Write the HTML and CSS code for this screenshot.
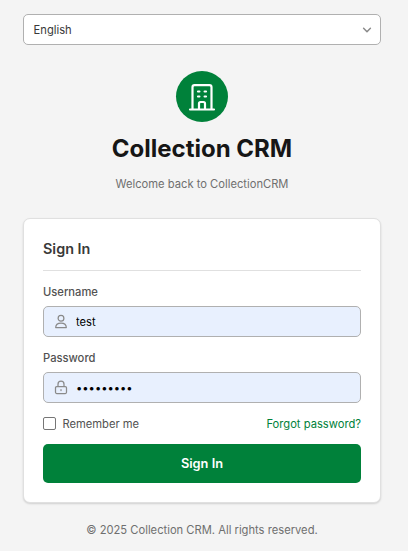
FILE: index.html
```html
<!DOCTYPE html>
<html lang="en">
<head>
<meta charset="utf-8">
<title>Collection CRM</title>
<link rel="stylesheet" href="styles.css">
</head>
<body>
<main class="page">
  <div class="language">
    <span>English</span>
    <svg class="chevron" viewBox="0 0 10 10"><path d="M1.6 3.3 5 6.7l3.4-3.4"/></svg>
  </div>
  <header class="brand">
    <div class="logo">
      <svg viewBox="0 0 32 32"><path d="M4 28.500h24M6.500 28.500V6.200a2 2 0 0 1 2-2h15a2 2 0 0 1 2 2v22.300M12 10.500h1.400M18.600 10.500h1.400M12 15.500h1.400M18.600 15.500h1.400M13 28.500v-6a1.500 1.500 0 0 1 1.500-1.500h3a1.500 1.500 0 0 1 1.500 1.500v6"/></svg>
    </div>
    <h1>Collection CRM</h1>
    <p>Welcome back to CollectionCRM</p>
  </header>
  <form class="card">
    <h2>Sign In</h2>
    <label class="label" for="username">Username</label>
    <div class="field">
      <svg viewBox="0 0 14 15"><circle cx="7" cy="4.200" r="2.900"/><path d="M1.700 13.500C1.700 10.600 4 9 7 9s5.300 1.600 5.300 4.500Z"/></svg>
      <input id="username" type="text" value="test">
    </div>
    <label class="label" for="password">Password</label>
    <div class="field">
      <svg viewBox="0 0 14 15"><path d="M4 6.500V4.200a3 3 0 0 1 6 0v2.300M2.700 6.500h8.600a1.200 1.200 0 0 1 1.200 1.200v4.600a1.200 1.200 0 0 1-1.200 1.200H2.700a1.200 1.200 0 0 1-1.200-1.200V7.700a1.200 1.200 0 0 1 1.200-1.200ZM7 9.700v.8"/></svg>
      <input id="password" type="password" value="password1">
    </div>
    <div class="options">
      <label class="remember"><input type="checkbox">Remember me</label>
      <a href="#">Forgot password?</a>
    </div>
    <button type="button">Sign In</button>
  </form>
  <footer>© 2025 Collection CRM. All rights reserved.</footer>
</main>
</body>
</html>
```
FILE: styles.css
```css
* {
  box-sizing: border-box;
}

body {
  margin: 0;
  background: #f4f4f4;
  color: #525252;
  font: 11.2px/16px Inter, "Liberation Sans", sans-serif;
}

.page {
  width: 358px;
  margin: 0 auto 0 23px;
  padding-top: 14px;
}

.language {
  display: flex;
  align-items: center;
  justify-content: space-between;
  height: 31px;
  padding: 0 8px 0 9.6px;
  border: 1px solid #b0b0b0;
  border-radius: 5px;
  background: #fff;
  color: #393939;
}

svg {
  fill: none;
  stroke: currentColor;
  stroke-linecap: round;
  stroke-linejoin: round;
}

.chevron {
  width: 10px;
  height: 10px;
  color: #8a8a8a;
  stroke-width: 1.5;
}

.brand {
  display: flex;
  flex-direction: column;
  align-items: center;
  padding-top: 26px;
}

.logo {
  display: grid;
  place-items: center;
  width: 52px;
  height: 51px;
  border-radius: 50%;
  background: #00813a;
  color: #fff;
}

.logo svg {
  width: 32px;
  height: 32px;
  stroke-width: 2.2;
}

h1 {
  margin: 11px 0 0;
  color: #161616;
  font-size: 24px;
  font-weight: 700;
  line-height: 32px;
}

.brand p {
  margin: 11px 0 0;
  color: #6f6f6f;
}

.card {
  height: 285px;
  margin-top: 26px;
  padding: 19px;
  border: 1px solid #e0e0e0;
  border-radius: 7px;
  background: #fff;
  box-shadow: 0 1px 2px rgba(0, 0, 0, 0.15);
}

h2 {
  height: 33px;
  margin: 0 0 13px;
  border-bottom: 1px solid #e0e0e0;
  color: #393939;
  font-size: 14.4px;
  font-weight: 600;
  line-height: 22px;
}

.label {
  display: block;
  height: 16px;
  margin-bottom: 6px;
  font-weight: 500;
}

.field {
  display: flex;
  align-items: center;
  gap: 8px;
  height: 31px;
  margin-bottom: 13px;
  padding: 0 10px;
  border: 1px solid #b0b0b0;
  border-radius: 5px;
  background: #e8f0fe;
}

.field svg {
  flex: none;
  width: 14px;
  height: 15px;
  color: #8a8a8a;
  stroke-width: 1.25;
}

.field input {
  flex: 1;
  min-width: 0;
  padding: 0;
  border: 0;
  outline: 0;
  background: transparent;
  color: #000;
  font: inherit;
}

.options {
  display: flex;
  align-items: center;
  justify-content: space-between;
  height: 16px;
}

.remember {
  display: flex;
  align-items: center;
  gap: 6.4px;
}

.remember input {
  appearance: none;
  width: 13px;
  height: 13px;
  margin: 0 0 1px;
  border: 1px solid #767676;
  border-radius: 2px;
  background: #fff;
}

.options a {
  color: #00813a;
  text-decoration: none;
}

button {
  display: block;
  width: 100%;
  height: 39px;
  margin-top: 12px;
  padding: 0;
  border: 0;
  border-radius: 5px;
  background: #00813a;
  color: #fff;
  font: 600 12.8px/20px Inter, "Liberation Sans", sans-serif;
}

footer {
  margin-top: 19px;
  color: #6f6f6f;
  text-align: center;
}
```
